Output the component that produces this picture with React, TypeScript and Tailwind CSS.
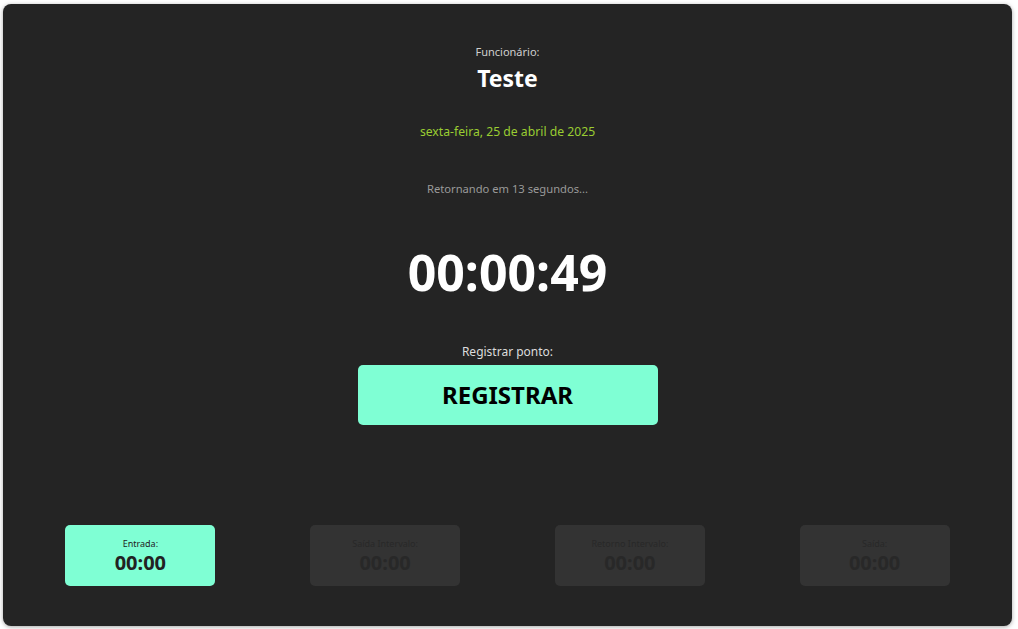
import React from 'react';

type Punch = {
  label: string;
  time: string;
  done: boolean;
};

const punches: Punch[] = [
  { label: 'Entrada:', time: '00:00', done: true },
  { label: 'Saída Intervalo:', time: '00:00', done: false },
  { label: 'Retorno Intervalo:', time: '00:00', done: false },
  { label: 'Saída:', time: '00:00', done: false },
];

function PunchCard({ punch }: { punch: Punch }) {
  return (
    <div
      className={
        punch.done
          ? 'flex h-[61px] w-[150px] flex-col items-center justify-center rounded-[5px] bg-[#7fffd4] text-[#222]'
          : 'flex h-[61px] w-[150px] flex-col items-center justify-center rounded-[5px] bg-[#333333] text-[#282828]'
      }
    >
      <span className="text-[9px] leading-[14px]">{punch.label}</span>
      <span className="text-[20px] font-bold leading-[24px]">{punch.time}</span>
    </div>
  );
}

export default function App() {
  return (
    <div
      className="h-[629px] w-full bg-white px-[3px] pt-[4px]"
      style={{ fontFamily: '"Noto Sans", "Open Sans", sans-serif' }}
    >
      <div className="flex h-[622px] w-[1009px] flex-col rounded-[8px] bg-[#242424] shadow-[0_1px_4px_rgba(0,0,0,0.35)]">
        <div className="flex flex-col items-center pt-[40px]">
          <p className="text-[11px] leading-[16px] text-[#cfcfcf]">Funcionário:</p>
          <h1 className="mt-[2px] text-[23px] font-bold leading-[32px] text-white">Teste</h1>

          <p className="mt-[29px] text-[12.2px] leading-[18px] text-[#9acd32]">sexta-feira, 25 de abril de 2025</p>

          <p className="mt-[40px] text-[11.2px] leading-[16px] text-[#9a9a9a]">Retornando em 13 segundos...</p>

          <div className="mt-[45px] text-[50px] font-bold leading-[60px] text-white">00:00:49</div>

          <p className="mt-[41px] text-[12px] leading-[18px] text-[#dcdcdc]">Registrar ponto:</p>
          <button
            type="button"
            className="mt-[4px] h-[60px] w-[300px] rounded-[5px] bg-[#7fffd4] text-[24px] font-bold text-black"
          >
            REGISTRAR
          </button>
        </div>

        <div className="mt-auto grid grid-cols-4 px-[15px] pb-[40px]">
          {punches.map((punch) => (
            <div key={punch.label} className="flex justify-center">
              <PunchCard punch={punch} />
            </div>
          ))}
        </div>
      </div>
    </div>
  );
}
